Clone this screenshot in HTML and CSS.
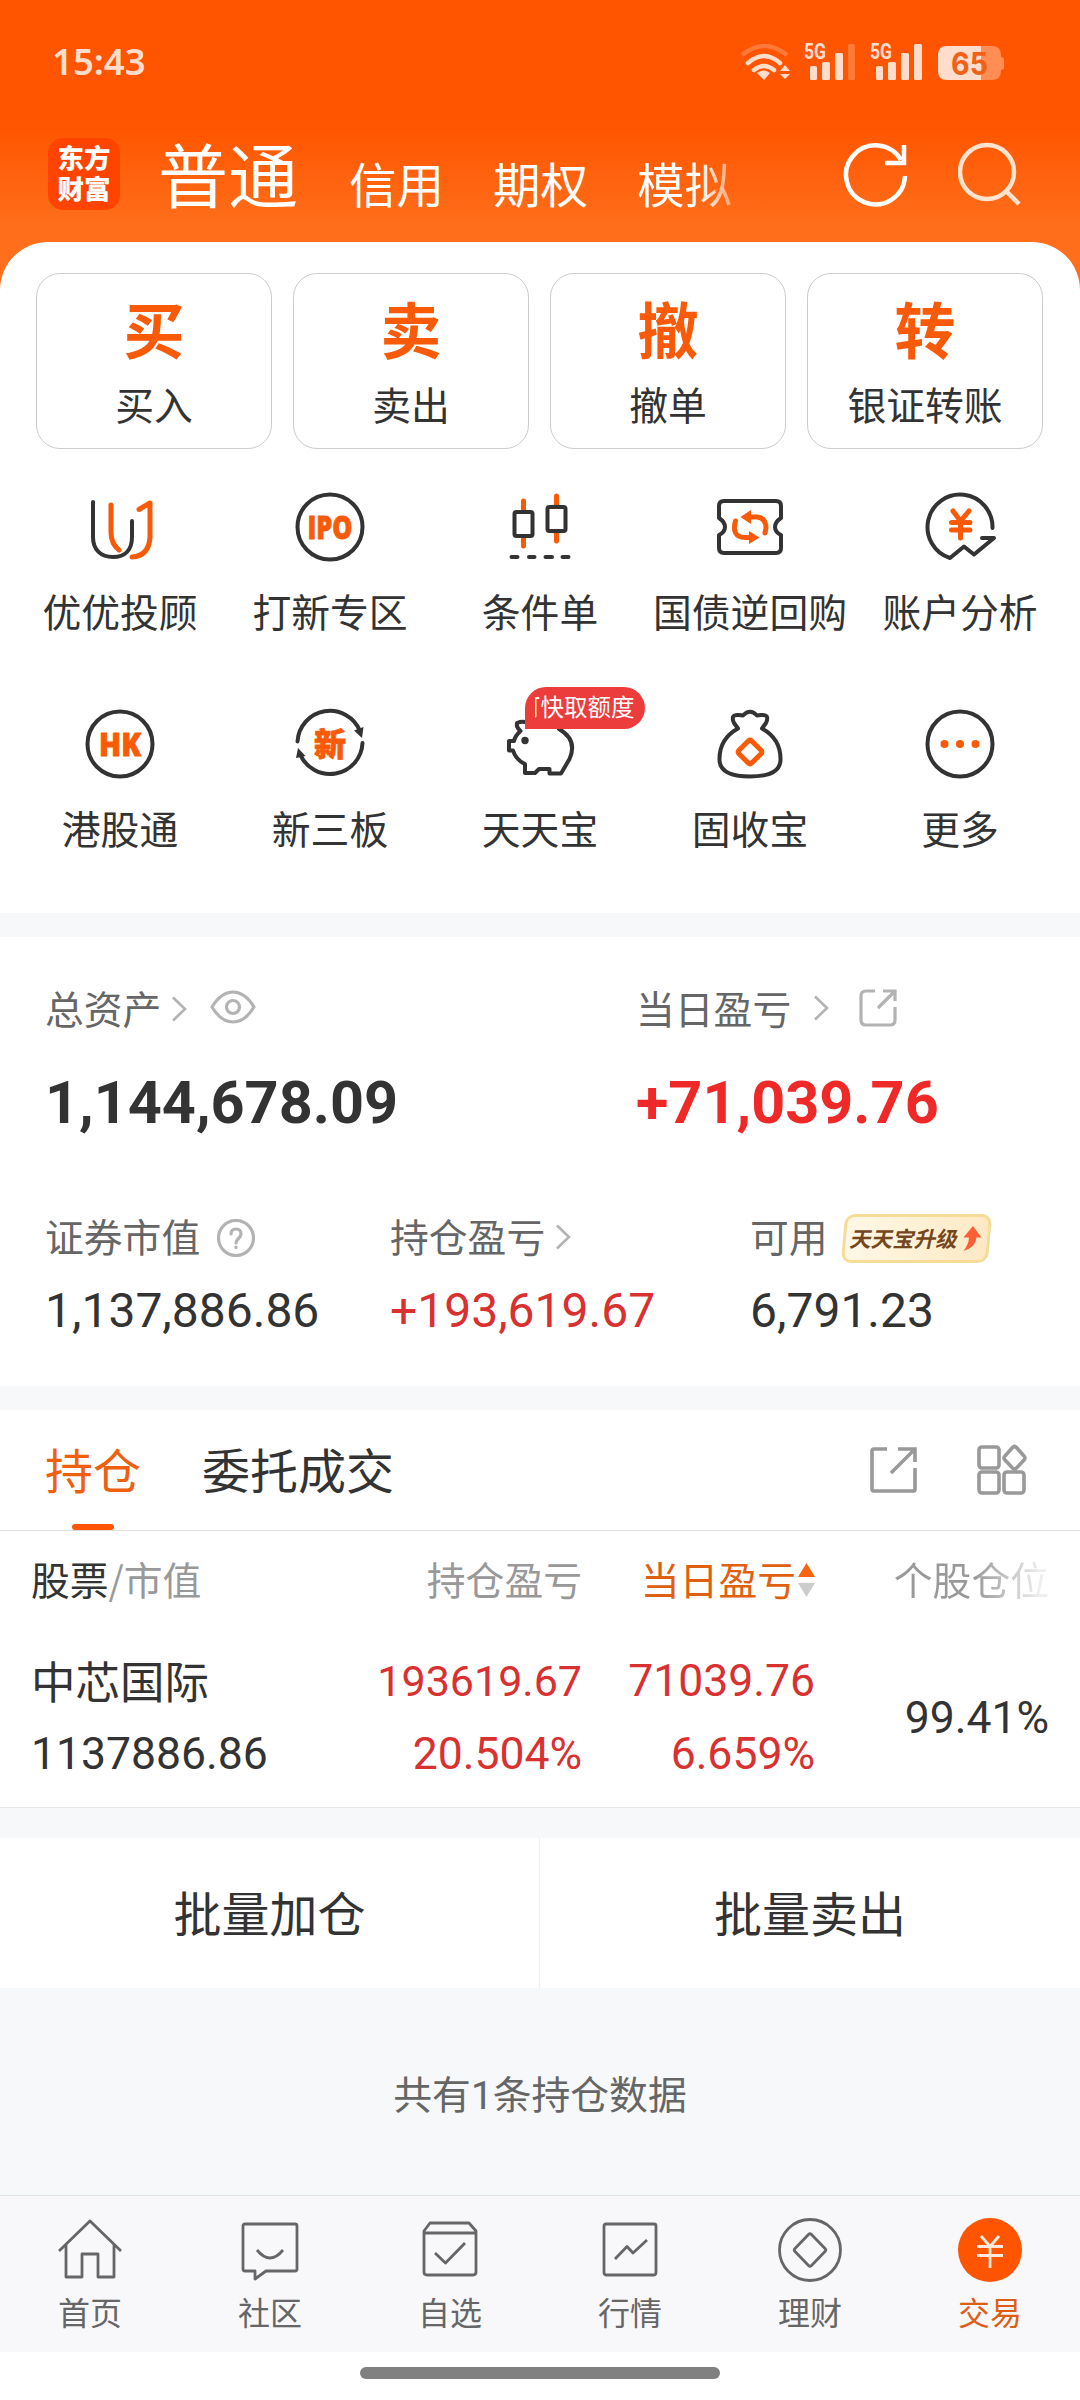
FILE: index.html
```html
<!DOCTYPE html>
<html lang="zh-CN">
<head>
    <meta charset="UTF-8">
    <meta name="viewport" content="width=device-width, initial-scale=1.0">
    <title>交易</title>
    <link rel="stylesheet" href="styles.css">
</head>
<body>
    <div class="top">
        <div class="status-bar">
            <span class="time">15:43</span>
            <svg class="status-icons" width="268" height="44" viewBox="0 0 268 44">
                <g fill="none" stroke="#ffddcc" stroke-width="4.5" stroke-linecap="round">
                    <path d="M6 15Q28 -3 51 15" stroke="#ff7a38" stroke-linecap="butt"/>
                    <path d="M12 23Q28 9 44 23"/>
                    <path d="M18 30Q28 22 38 30"/>
                </g>
                <g fill="#ffddcc">
                    <path d="M21 33Q28 28 34 33L28 40ZM49 25L54 31H44ZM44 34H54L49 39Z"/>
                    <rect x="74" y="26" width="7" height="14" rx="1.5"/>
                    <rect x="86" y="22" width="8" height="18" rx="1.5"/>
                    <rect x="99" y="13" width="8" height="27" rx="1.5"/>
                    <rect x="140" y="26" width="7" height="14" rx="1.5"/>
                    <rect x="152" y="22" width="8" height="18" rx="1.5"/>
                    <rect x="165" y="13" width="8" height="27" rx="1.5"/>
                    <rect x="178" y="4" width="8" height="36" rx="1.5"/>
                    <text class="net" x="68" y="19" textLength="22" lengthAdjust="spacingAndGlyphs">5G</text>
                    <text class="net" x="134" y="19" textLength="22" lengthAdjust="spacingAndGlyphs">5G</text>
                </g>
                <rect x="112" y="4" width="7" height="36" rx="1.5" fill="#ff7a38"/>
                <path d="M245 6H256Q265 6 265 15V17Q268 17 268 20V27Q268 30 265 30V31Q265 40 256 40H245Z" fill="#ff8d54"/>
                <path d="M245 6H211Q202 6 202 15V31Q202 40 211 40H245Z" fill="#ffddcc"/>
                <text class="battery" x="215" y="35" textLength="37" lengthAdjust="spacingAndGlyphs">65</text>
            </svg>
        </div>
        <div class="title-bar">
            <div class="logo"><span>东方</span><span>财富</span></div>
            <div class="modes">
                <span class="mode mode-active">普通</span>
                <span class="mode">信用</span>
                <span class="mode">期权</span>
                <span class="mode mode-fade">模拟</span>
            </div>
            <svg class="refresh" width="64" height="64" viewBox="0 0 64 64" fill="none" stroke="#fff" stroke-width="4.5">
                <path d="M61 34A29.500 29.500 0 1 1 57 18"/>
                <path d="M60 3V21H41"/>
            </svg>
            <svg class="search" width="64" height="64" viewBox="0 0 64 64" fill="none" stroke="#ffe3d0" stroke-width="4.5">
                <circle cx="29" cy="30" r="27"/>
                <path d="M48 49L61 62"/>
            </svg>
        </div>
        <div class="sheet">
            <div class="quick">
                <div class="quick-card"><b>买</b><span>买入</span></div>
                <div class="quick-card"><b>卖</b><span>卖出</span></div>
                <div class="quick-card"><b>撤</b><span>撤单</span></div>
                <div class="quick-card"><b>转</b><span>银证转账</span></div>
            </div>
            <div class="services">
                <div class="service">
                    <svg class="icon" viewBox="0 0 70 70">
                        <path class="dark" d="M8 10V45C8 58 16 65 28 65S47 58 47 45V29"/>
                        <path class="orange" d="M26 13V40Q26 52 34 58M54 17.500L65 11V45Q64 64 47 65"/>
                    </svg>
                    <span>优优投顾</span>
                </div>
                <div class="service">
                    <svg class="icon" viewBox="0 0 70 70">
                        <circle class="dark" cx="35" cy="35" r="32.500"/>
                        <text class="icon-text" x="12.500" y="46.500" textLength="45" lengthAdjust="spacingAndGlyphs">IPO</text>
                    </svg>
                    <span>打新专区</span>
                </div>
                <div class="service">
                    <svg class="icon" viewBox="0 0 70 70">
                        <path class="orange" d="M18.500 9V18M18.500 45V54M51.500 4V13M51.500 40V49"/>
                        <rect class="dark" x="9.500" y="20" width="18" height="24" rx="2"/>
                        <rect class="dark" x="42.500" y="15" width="18" height="24" rx="2"/>
                        <path class="dark" d="M6.500 65H12.500M24 65H29.500M40.500 65H47M57.500 65H63.500"/>
                    </svg>
                    <span>条件单</span>
                </div>
                <div class="service">
                    <svg class="icon" viewBox="0 0 70 70">
                        <path class="dark" d="M9 9H61Q66 9 66 14V26Q60 30 60 35T66 43V56Q66 61 61 61H9Q4 61 4 56V43Q10 40 10 35T4 26V14Q4 9 9 9Z"/>
                        <path class="orange" d="M35 25H42Q51 26 51 36L50 41M20.500 29Q16 45 30 45.500H37"/>
                        <path class="orange-fill" d="M25.500 25L36 18V32ZM44.500 45.500L34 39V52Z"/>
                    </svg>
                    <span>国债逆回购</span>
                </div>
                <div class="service">
                    <svg class="icon" viewBox="0 0 70 70">
                        <path class="dark" d="M67.500 36A32.500 32.500 0 1 0 25 66L39 54.500L49 62.500L69 46H57"/>
                        <path class="orange" d="M28 19L35.500 29L44 19M35.500 30V46M26.500 30.500H45M26.500 38H45"/>
                    </svg>
                    <span>账户分析</span>
                </div>
                <div class="service">
                    <svg class="icon" viewBox="0 0 70 70">
                        <circle class="dark" cx="35" cy="35" r="32.500"/>
                        <text class="icon-text" x="14" y="46.500" textLength="42" lengthAdjust="spacingAndGlyphs">HK</text>
                    </svg>
                    <span>港股通</span>
                </div>
                <div class="service">
                    <svg class="icon" viewBox="0 0 70 70">
                        <path class="dark" d="M2.500 32.500A32.500 32.500 0 0 1 65 22M67.500 34A32.500 32.500 0 0 1 5 45"/>
                        <path class="dark-fill" d="M59 21.500L68.500 18L67 29ZM1 49L3 39L10.500 47Z"/>
                        <text class="icon-xin" x="35" y="46.500">新</text>
                    </svg>
                    <span>新三板</span>
                </div>
                <div class="service">
                    <svg class="icon" viewBox="0 0 70 70">
                        <path class="dark" d="M22 13.500Q17 12 12 14Q11 18 15.500 22Q10 27 9 32H4V41.500H8Q11 51 20 55V64H30L34 60H44.500V64.500H56L64.500 50Q73 31 54 20"/>
                        <circle class="dark-fill" cx="20" cy="31.500" r="3.700"/>
                    </svg>
                    <div class="badge"><div>可快取额度</div></div>
                    <span>天天宝</span>
                </div>
                <div class="service">
                    <svg class="icon" viewBox="0 0 70 70">
                        <path class="dark" d="M23 19.500L19 14Q15 5 24 6L28 6.500Q35 -1 42 6.500L46 6Q55 5 51 14L47 19.500M23 19.500Q4 30 4.500 51Q5 67.500 35 67.500T65.500 51Q66 30 47 19.500"/>
                        <rect class="orange diamond" x="26" y="34" width="18" height="18" rx="2"/>
                    </svg>
                    <span>固收宝</span>
                </div>
                <div class="service">
                    <svg class="icon" viewBox="0 0 70 70">
                        <circle class="dark" cx="35" cy="35" r="32.500"/>
                        <g class="orange-fill">
                            <circle cx="19.500" cy="35" r="4"/>
                            <circle cx="35" cy="35" r="4"/>
                            <circle cx="50.500" cy="35" r="4"/>
                        </g>
                    </svg>
                    <span>更多</span>
                </div>
            </div>
        </div>
    </div>

    <div class="assets">
        <div class="totals">
            <div>
                <div class="asset-label">总资产
                    <svg class="chevron" width="16" height="26" viewBox="0 0 16 26"><path d="M2 1.500L14 13L2 24.500"/></svg>
                    <svg class="eye" width="46" height="34" viewBox="0 0 46 34"><path d="M2 17Q11 2 23 2T44 17Q35 32 23 32T2 17Z"/><circle cx="23" cy="17" r="6.500"/></svg>
                </div>
                <div class="total">1,144,678.09</div>
            </div>
            <div>
                <div class="asset-label label-day">当日盈亏
                    <svg class="chevron" width="16" height="26" viewBox="0 0 16 26"><path d="M2 1.500L14 13L2 24.500"/></svg>
                    <svg class="share" width="38" height="38" viewBox="0 0 38 38"><path d="M16 2H7Q2 2 2 7V31Q2 36 7 36H31Q36 36 36 31V18M24 2H36V12M35 3L19 19"/></svg>
                </div>
                <div class="total red-bold">+71,039.76</div>
            </div>
        </div>
        <div class="details">
            <div>
                <div class="asset-label">证券市值
                    <svg class="help" width="38" height="38" viewBox="0 0 38 38"><circle cx="19" cy="19" r="17.500"/><path d="M14 15Q14 10 19 10T24 15Q24 17 21.500 19.500T19 24M19 28V28.500"/></svg>
                </div>
                <div class="amount">1,137,886.86</div>
            </div>
            <div>
                <div class="asset-label">持仓盈亏
                    <svg class="chevron" width="16" height="26" viewBox="0 0 16 26"><path d="M2 1.500L14 13L2 24.500"/></svg>
                </div>
                <div class="amount red">+193,619.67</div>
            </div>
            <div>
                <div class="asset-label">可用
                    <div class="upgrade">
                        <span>天天宝升级</span>
                        <svg width="20" height="26" viewBox="0 0 20 26"><path d="M11 0L19.500 11.500H14.500Q14 21 1.500 25Q7 18 7 11.500H1.500Z" fill="#fa5f35"/></svg>
                    </div>
                </div>
                <div class="amount">6,791.23</div>
            </div>
        </div>
    </div>

    <div class="tabs">
        <span class="tab tab-active">持仓</span>
        <span class="tab">委托成交</span>
        <svg class="tab-share" width="48" height="48" viewBox="0 0 48 48"><path d="M18 3H5Q3 3 3 5V43Q3 45 5 45H45Q46 45 46 43V22M29 3H46V16M45 4L22 27"/></svg>
        <svg class="tab-grid" width="52" height="52" viewBox="0 0 52 52">
            <rect x="3" y="3" width="20" height="21" rx="3"/>
            <rect x="3" y="28" width="20" height="21" rx="3"/>
            <rect x="28" y="28" width="20" height="21" rx="3"/>
            <path d="M36.500 3.500Q38.500 1.500 40.500 3.500L48 12Q50 14 48 16L40.500 24Q38.500 26 36.500 24L29 16Q27 14 29 12Z"/>
        </svg>
    </div>
    <div class="holdings">
        <div class="row row-head">
            <span><em>股票</em>/市值</span>
            <span>持仓盈亏</span>
            <span class="sorted">当日盈亏
                <svg width="17" height="36" viewBox="0 0 17 36"><path d="M8.500 1L17 15H0Z" fill="#f96410"/><path d="M8.500 35L17 21H0Z" fill="#ccc"/></svg>
            </span>
            <span class="fade">个股仓位</span>
        </div>
        <div class="row row-stock">
            <div><p class="name">中芯国际</p><p>1137886.86</p></div>
            <div class="red"><p class="narrow">193619.67</p><p>20.504%</p></div>
            <div class="red"><p>71039.76</p><p>6.659%</p></div>
            <div><p>99.41%</p></div>
        </div>
    </div>
    <div class="batch">
        <div>批量加仓</div>
        <div>批量卖出</div>
    </div>
    <div class="count">共有1条持仓数据</div>

    <div class="nav">
        <div class="nav-item">
            <svg viewBox="0 0 64 64"><path d="M1 33L32 3L63 33M8 27V59H24V36H40V59H56V27"/></svg>
            <span>首页</span>
        </div>
        <div class="nav-item">
            <svg viewBox="0 0 64 64"><path d="M7 6H57Q59 6 59 8V51Q59 53 57 53H28L17 61V53H7Q5 53 5 51V8Q5 6 7 6ZM19 32Q32 48 45 32"/></svg>
            <span>社区</span>
        </div>
        <div class="nav-item">
            <svg viewBox="0 0 64 64"><path d="M12 5H51L58 13V54Q58 57 55 57H9Q6 57 6 54V13ZM6 15H58M17 35L27.500 45L47 25"/></svg>
            <span>自选</span>
        </div>
        <div class="nav-item">
            <svg viewBox="0 0 64 64"><path d="M8 6H56Q58 6 58 8V54Q58 57 56 57H8Q6 57 6 54V8Q6 6 8 6ZM17 41L29 28.500L35 35L49 22"/></svg>
            <span>行情</span>
        </div>
        <div class="nav-item">
            <svg viewBox="0 0 64 64"><circle cx="32" cy="32" r="30.500"/><path d="M30.500 16.500Q32 15 33.500 16.500L47 30.500Q48.500 32 47 33.500L33.500 47.500Q32 49 30.500 47.500L17 33.500Q15.500 32 17 30.500Z"/></svg>
            <span>理财</span>
        </div>
        <div class="nav-item nav-active">
            <svg viewBox="0 0 64 64"><circle cx="32" cy="32" r="32"/><path d="M23 18L32 28.500L41 18M32 28V50M19 28.500H45M19 37.500H45"/></svg>
            <span>交易</span>
        </div>
    </div>
    <div class="gesture"><div class="gesture-bar"></div></div>
</body>
</html>
```
FILE: styles.css
```css
* {
    box-sizing: border-box;
}
body {
    margin: 0;
    width: 1080px;
    height: 2400px;
    background-color: #f7f8fa;
    color: #333;
    font-family: "Noto Sans CJK SC", sans-serif;
    font-size: 38.8px;
    line-height: 40px;
    overflow: hidden;
}
p {
    margin: 0;
}
svg {
    display: block;
    flex: none;
}
.red {
    color: #d93030;
}

/* header */
.top {
    background: linear-gradient(#ff5500 125px, #ff6e1a 225px);
}
.status-bar {
    display: flex;
    align-items: center;
    justify-content: space-between;
    height: 123px;
    padding: 0 76px 0 52px;
}
.time {
    margin-top: -2px;
    color: #ffddcc;
    font-family: "Noto Sans", sans-serif;
    font-size: 36.5px;
    font-weight: 600;
}
.net {
    font-family: Roboto, sans-serif;
    font-size: 22px;
    font-weight: bold;
}
.battery {
    fill: #f26018;
    font-family: Inter, sans-serif;
    font-size: 31px;
    font-weight: bold;
}
.title-bar {
    display: flex;
    align-items: center;
    height: 119px;
    padding: 0 58px 17px 48px;
    color: #fff;
}
.logo {
    display: flex;
    flex-direction: column;
    width: 72px;
    height: 72px;
    padding-top: 3px;
    border-radius: 15px;
    background-color: #ff4400;
    font-size: 26.5px;
    font-weight: 900;
    line-height: 31px;
    text-align: center;
}
.modes {
    display: flex;
    align-items: center;
    flex: 1;
    margin-left: 38px;
}
.mode {
    margin: 17px 49px 0 0;
    font-size: 47.5px;
    line-height: 70px;
}
.mode-active {
    margin: -2px 51px 0 0;
    font-size: 70px;
}
.mode-fade {
    background: linear-gradient(to right, #fff 65%, rgba(255, 255, 255, 0.4));
    background-clip: text;
    color: transparent;
}
.refresh {
    overflow: visible;
}
.search {
    margin-left: 50px;
}
.sheet {
    padding-top: 31px;
    border-radius: 48px 48px 0 0;
    background-color: #fff;
}

/* quick actions */
.quick {
    display: grid;
    grid-template-columns: repeat(4, 236px);
    gap: 21px;
    padding: 0 36px;
}
.quick-card {
    display: flex;
    flex-direction: column;
    align-items: center;
    gap: 25px;
    height: 176px;
    padding-top: 24px;
    border: 1px solid #ccc;
    border-radius: 24px;
}
.quick-card b {
    color: #f95a08;
    font-size: 61px;
    line-height: 60px;
}
.services {
    display: grid;
    grid-template-columns: repeat(5, 210px);
    row-gap: 79px;
    padding: 43px 15px 66px;
}
.service {
    position: relative;
    display: flex;
    flex-direction: column;
    align-items: center;
    gap: 28px;
    white-space: nowrap;
}
.icon {
    width: 70px;
    height: 70px;
    overflow: visible;
}
.dark, .orange {
    fill: none;
    stroke: #333;
    stroke-width: 4;
    stroke-linecap: round;
    stroke-linejoin: round;
}
.orange {
    stroke: #f95a08;
    stroke-width: 5;
}
.dark-fill {
    fill: #333;
}
.orange-fill {
    fill: #f95a08;
}
.diamond {
    transform: rotate(45deg);
    transform-origin: 35px 43px;
}
.icon-text, .icon-xin {
    fill: #f95a08;
    stroke: #f95a08;
    stroke-width: 0.8px;
    stroke-linejoin: round;
    font-family: "Open Sans", sans-serif;
    font-size: 32px;
    font-weight: 800;
}
.icon-xin {
    font-family: "Noto Sans CJK SC", sans-serif;
    text-anchor: middle;
}
.badge {
    position: absolute;
    left: 90px;
    top: -22px;
    width: 120px;
    height: 42px;
    padding: 0 10.5px 0 9.5px;
    border-radius: 21px 21px 21px 0;
    background-color: #ec3c3c;
    color: #fff;
    font-size: 23.5px;
    line-height: 39px;
}
.badge div {
    display: flex;
    justify-content: flex-end;
    overflow: hidden;
}

/* assets */
.assets {
    height: 449px;
    margin: 24px 0;
    padding: 50px 0 0 45px;
    background-color: #fff;
}
.totals {
    display: grid;
    grid-template-columns: 591px 1fr;
}
.details {
    display: grid;
    grid-template-columns: 345px 360px 1fr;
    margin-top: 82px;
}
.asset-label {
    display: flex;
    align-items: center;
    height: 40px;
    color: #666;
}
.asset-label svg {
    fill: none;
    stroke: #b3b3b3;
    stroke-width: 3.2;
}
.asset-label .chevron {
    margin: 4px 0 0 10px;
    stroke-width: 2.6;
}
.eye {
    margin-left: 23px;
}
.label-day .chevron {
    margin: 2px 0 0 22px;
}
.share {
    margin: 1px 0 0 30px;
}
.help {
    margin: 6px 0 0 17px;
    stroke-linecap: round;
}
.total {
    margin-top: 46px;
    font-family: Roboto, sans-serif;
    font-size: 59.4px;
    font-weight: bold;
    line-height: 60px;
}
.red-bold {
    color: #ef2828;
}
.amount {
    margin-top: 32px;
    font-family: Roboto, sans-serif;
    font-size: 48px;
    line-height: 48px;
}
.upgrade {
    display: flex;
    align-items: center;
    justify-content: center;
    gap: 3px;
    width: 147px;
    height: 49px;
    margin: 6px 0 0 15px;
    border: 3px solid #f6dc96;
    border-radius: 10px;
    background: linear-gradient(to right, #fff8e6, #fde9c4);
    transform: skewX(-5deg);
    color: #74471f;
    font-size: 21.5px;
    font-weight: bold;
    white-space: nowrap;
}
.upgrade span {
    margin-top: -2px;
    transform: skewX(-8deg);
}
.asset-label .upgrade svg {
    stroke: none;
    transform: skewX(5deg);
}

/* holdings */
.tabs {
    display: flex;
    align-items: center;
    height: 121px;
    padding: 0 52px 0 45px;
    border-bottom: 1px solid #ddd;
    background-color: #fff;
    font-size: 48px;
}
.tab {
    position: relative;
    height: 120px;
    margin-right: 61px;
    line-height: 117px;
}
.tab-active {
    color: #ee5f10;
}
.tab-active::after {
    content: "";
    position: absolute;
    left: 27px;
    bottom: 0;
    width: 42px;
    height: 6px;
    border-radius: 3px;
    background-color: #ff5500;
}
.tabs svg {
    fill: none;
    stroke: #999;
    stroke-width: 3.6;
}
.tab-share {
    margin-left: auto;
}
.tab-grid {
    margin-left: 59px;
}
.holdings {
    height: 277px;
    border-bottom: 1px solid #eaeaea;
    background-color: #fff;
}
.row {
    display: grid;
    grid-template-columns: 309px 242px 233px 234px;
    padding-left: 31px;
    text-align: right;
}
.row > :first-child {
    text-align: left;
}
.row-head {
    height: 94px;
    color: #999;
    line-height: 94px;
}
.row-head em {
    color: #333;
    font-style: normal;
}
.sorted {
    display: flex;
    align-items: center;
    justify-content: flex-end;
    gap: 2px;
    color: #df6010;
}
.sorted svg {
    margin-top: 4px;
}
.fade {
    background: linear-gradient(to right, #999 68%, #eee 96%);
    background-clip: text;
    color: transparent;
}
.row-stock {
    align-items: center;
    padding-top: 20px;
    font-family: Roboto, sans-serif;
    font-size: 44.5px;
    line-height: 73px;
}
.row-stock .name {
    margin-top: -2px;
    padding-bottom: 2px;
    font-family: "Noto Sans CJK SC", sans-serif;
}
.row-stock .narrow {
    font-size: 43px;
}
.batch {
    display: grid;
    grid-template-columns: 1fr 1fr;
    height: 150px;
    margin-top: 30px;
    background-color: #fff;
    font-size: 48px;
    line-height: 146px;
    text-align: center;
}
.batch div:first-child {
    border-right: 1px solid #eee;
}
.count {
    height: 207px;
    color: #666;
    font-family: Roboto, "Noto Sans CJK SC", sans-serif;
    line-height: 215px;
    text-align: center;
}

/* bottom navigation */
.nav {
    display: grid;
    grid-template-columns: repeat(6, 1fr);
    height: 157px;
    padding-top: 22px;
    border-top: 1px solid #dfe1e4;
    background-color: #f8f8fb;
    color: #666;
    font-size: 32px;
}
.nav-item {
    display: flex;
    flex-direction: column;
    align-items: center;
    gap: 9px;
}
.nav-item svg {
    width: 64px;
    height: 64px;
    fill: none;
    stroke: #666;
    stroke-width: 2.8;
    stroke-linejoin: round;
}
.nav-active {
    color: #dd5f15;
}
.nav-active svg {
    stroke: #ffe9dc;
}
.nav-active circle {
    fill: #ff5500;
    stroke: none;
}
.gesture {
    height: 48px;
    padding-top: 15px;
    background-color: #fff;
}
.gesture-bar {
    width: 360px;
    height: 12px;
    margin: 0 auto;
    border-radius: 6px;
    background-color: #808080;
}
```
